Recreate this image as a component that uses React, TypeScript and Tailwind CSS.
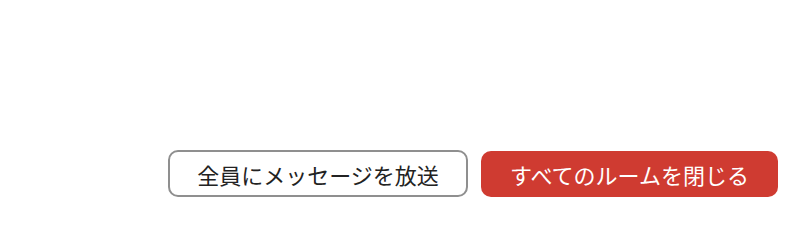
export default function App() {
  return (
    <div
      className="w-[810px] h-[226px] bg-white flex justify-end items-start gap-[13px] pt-[150px] pr-[32px]"
      style={{ fontFamily: '"Noto Sans CJK JP", "Noto Sans", sans-serif' }}
    >
      <button className="w-[300px] h-[47px] rounded-[10px] border-2 border-[#8f8f8f] bg-white text-[#222] text-[22px] leading-none flex items-center justify-center">
        全員にメッセージを放送
      </button>
      <button className="w-[297px] h-[46px] mt-px rounded-[10px] bg-[#cf3b31] text-white text-[22px] leading-none flex items-center justify-center">
        すべてのルームを閉じる
      </button>
    </div>
  );
}
